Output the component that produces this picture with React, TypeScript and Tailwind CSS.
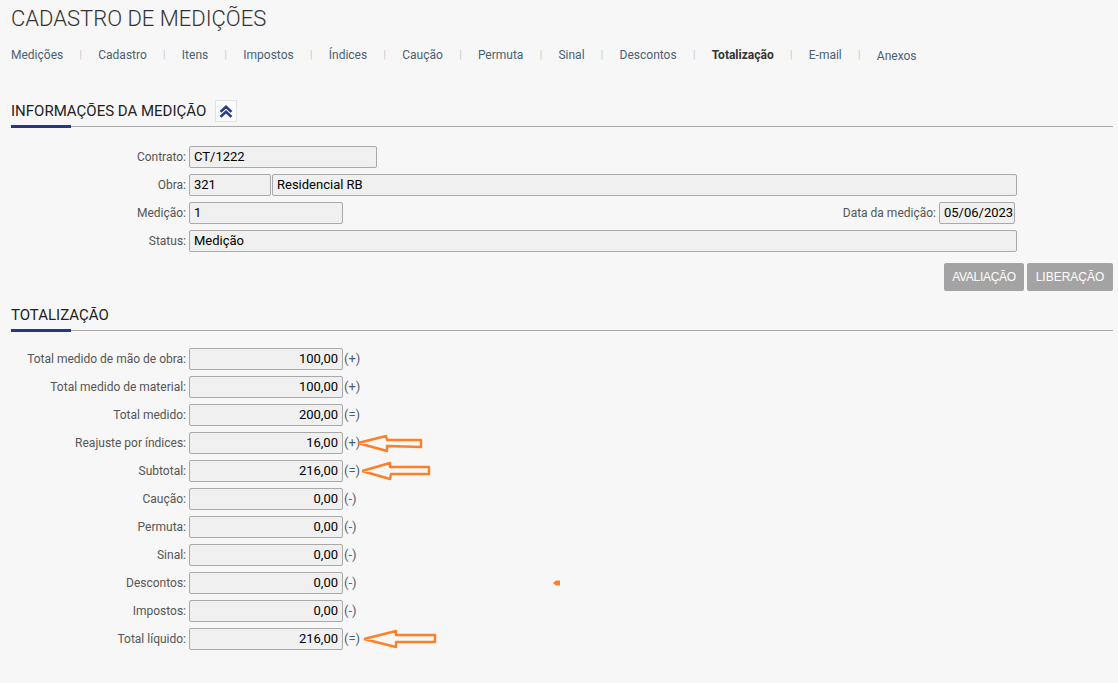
const tabs = [
  "Medições",
  "Cadastro",
  "Itens",
  "Impostos",
  "Índices",
  "Caução",
  "Permuta",
  "Sinal",
  "Descontos",
  "Totalização",
  "E-mail",
  "Anexos",
]

const totals = [
  { label: "Total medido de mão de obra", value: "100,00", sign: "(+)" },
  { label: "Total medido de material", value: "100,00", sign: "(+)" },
  { label: "Total medido", value: "200,00", sign: "(=)" },
  { label: "Reajuste por índices", value: "16,00", sign: "(+)", arrow: "a" },
  { label: "Subtotal", value: "216,00", sign: "(=)", arrow: "b" },
  { label: "Caução", value: "0,00", sign: "(-)" },
  { label: "Permuta", value: "0,00", sign: "(-)" },
  { label: "Sinal", value: "0,00", sign: "(-)" },
  { label: "Descontos", value: "0,00", sign: "(-)", dot: true },
  { label: "Impostos", value: "0,00", sign: "(-)" },
  { label: "Total líquido", value: "216,00", sign: "(=)", arrow: "c" },
]

function Field({ value, className = "", right = false }: { value: string; className?: string; right?: boolean }) {
  return (
    <div
      className={`flex h-[22px] items-center rounded-[2px] border border-[#a9a9a9] bg-[#f0f0f0] px-[4px] text-[13px] text-black ${right ? "justify-end" : ""} ${className}`}
    >
      {value}
    </div>
  )
}

function SectionHeader({ title, toggle = false }: { title: string; toggle?: boolean }) {
  return (
    <div>
      <div className="flex h-[22px] items-center gap-[9px]">
        <h2 className="text-[15px] text-[#222]">{title}</h2>
        {toggle && (
          <div className="flex h-[22px] w-[22px] items-center justify-center border border-[#e2e2e2] bg-[#fbfbfb]">
            <svg width="14" height="14" viewBox="0 0 14 14" fill="none" stroke="#2b3a8c" strokeWidth="2.6" strokeLinecap="square">
              <polyline points="2.5,7 7,2.8 11.5,7" />
              <polyline points="2.5,12 7,7.8 11.5,12" />
            </svg>
          </div>
        )}
      </div>
      <div className="mt-[3px] flex items-center">
        <div className="h-[3px] w-[60px] bg-[#27358a]" />
        <div className="h-px flex-1 bg-[#a8a8a8]" />
      </div>
    </div>
  )
}

function Arrow({ kind }: { kind: string }) {
  if (kind === "a")
    return (
      <svg width="70" height="22" viewBox="0 0 70 22" fill="none" stroke="#ff7f27" strokeWidth="2.4" strokeLinejoin="round" className="-ml-[4px]">
        <polyline points="2,11 30,4 31,8 65,8 65,15 31,14 31,19 2,11" />
      </svg>
    )
  if (kind === "b")
    return (
      <svg width="72" height="22" viewBox="0 0 72 22" fill="none" stroke="#ff7f27" strokeWidth="2.4" strokeLinejoin="round" className="ml-[0px]">
        <polyline points="2,11 30,3 30,7 69,7 69,14 31,14 30,19 2,11" />
      </svg>
    )
  return (
    <svg width="80" height="22" viewBox="0 0 80 22" fill="none" stroke="#ff7f27" strokeWidth="2.4" strokeLinejoin="round" className="ml-[2px]">
      <polyline points="2,11 34,3 34,7 73,7 73,14 34,14 34,19 2,11" />
    </svg>
  )
}

export default function App() {
  return (
    <div className="min-h-[683px] bg-[#f7f7f7] pl-[11px] pr-[5px] font-['Roboto',_'Liberation_Sans',_sans-serif] text-[12px]">
      <h1 className="pt-[6px] text-[22px] leading-[26px] font-light text-[#333]">CADASTRO DE MEDIÇÕES</h1>

      <nav className="mt-[14px] flex items-center text-[12px] leading-[16px] text-[#4a5f74]">
        {tabs.map((t, i) => (
          <div key={t} className="flex items-center">
            <span className={t === "Totalização" ? "font-bold text-[#333]" : t === "Anexos" ? "pt-[2px]" : ""}>{t}</span>
            {i < tabs.length - 1 && <span className="mx-[16.3px] text-[10px] text-[#c8c8c8]">|</span>}
          </div>
        ))}
      </nav>

      <div className="mt-[36px]">
        <SectionHeader title="INFORMAÇÕES DA MEDIÇÃO" toggle />
      </div>

      <div className="mt-[18px] flex w-[1006px] flex-col gap-[6px]">
        <div className="flex items-center">
          <span className="w-[177px] pr-[2px] text-right text-[#555]">Contrato:</span>
          <Field value="CT/1222" className="ml-[1px] w-[188px]" />
        </div>
        <div className="flex items-center">
          <span className="w-[177px] pr-[2px] text-right text-[#555]">Obra:</span>
          <Field value="321" className="ml-[1px] w-[82px]" />
          <Field value="Residencial RB" className="ml-[1px] flex-1" />
        </div>
        <div className="flex items-center">
          <span className="w-[177px] pr-[2px] text-right text-[#555]">Medição:</span>
          <Field value="1" className="ml-[1px] w-[154px]" />
          <div className="flex-1" />
          <span className="pr-[3px] text-[#555]">Data da medição:</span>
          <Field value="05/06/2023" className="mr-[2px] w-[76px]" />
        </div>
        <div className="flex items-center">
          <span className="w-[177px] pr-[2px] text-right text-[#555]">Status:</span>
          <Field value="Medição" className="ml-[1px] flex-1" />
        </div>
      </div>

      <div className="mt-[11px] flex justify-end gap-[3px]">
        <button className="h-[28px] w-[80px] rounded-[2px] bg-[#a3a3a3] font-['Liberation_Sans',_sans-serif] text-[12px] tracking-[-0.3px] text-white">AVALIAÇÃO</button>
        <button className="h-[28px] w-[86px] rounded-[2px] bg-[#a3a3a3] font-['Liberation_Sans',_sans-serif] text-[12px] text-white">LIBERAÇÃO</button>
      </div>

      <div className="mt-[13px]">
        <SectionHeader title="TOTALIZAÇÃO" />
      </div>

      <div className="mt-[16px] flex flex-col gap-[6px]">
        {totals.map((r) => (
          <div key={r.label} className="flex items-center">
            <span className="w-[177px] pr-[2px] text-right text-[#555]">{r.label}:</span>
            <Field value={r.value} right className="ml-[1px] w-[154px]" />
            <span className="ml-[1px] text-[13px] text-[#4a5f74]">{r.sign}</span>
            {r.arrow && <Arrow kind={r.arrow} />}
            {r.dot && (
              <svg width="10" height="8" viewBox="0 0 10 8" className="ml-[195px]">
                <path d="M1,4 L4,1.5 L8,1.5 L8,6.5 L4,6.5 Z" fill="#ff7f27" />
              </svg>
            )}
          </div>
        ))}
      </div>
    </div>
  )
}
